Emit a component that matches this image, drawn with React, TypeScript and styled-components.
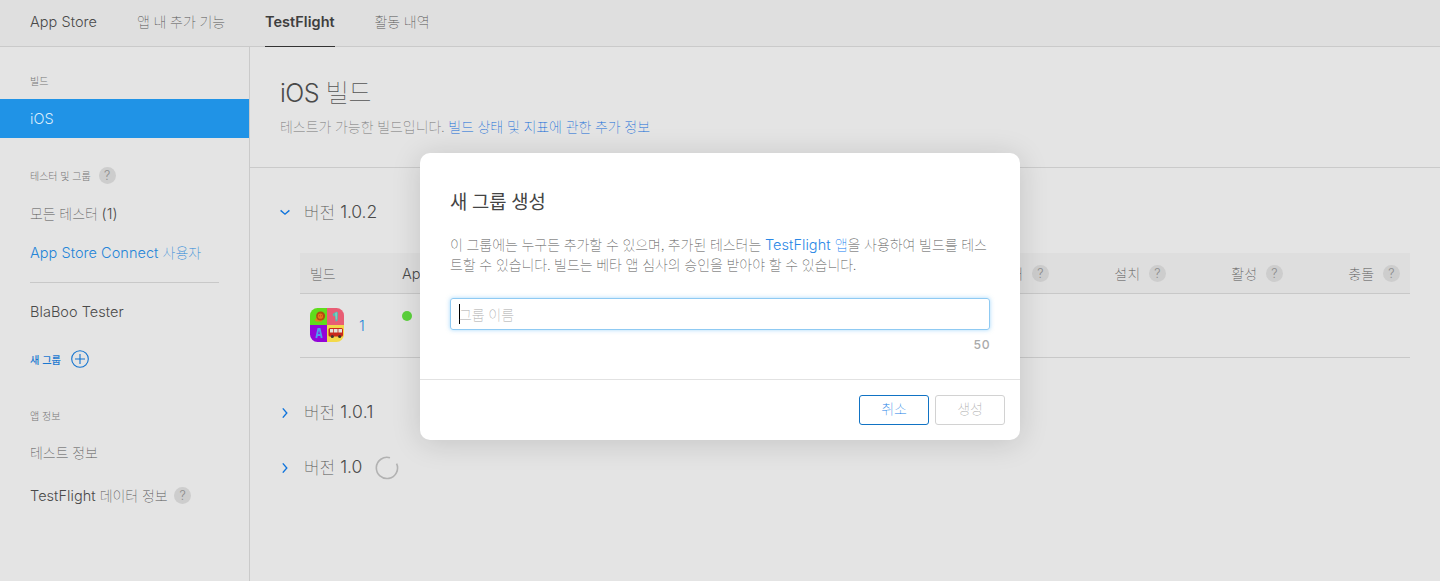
import React from "react";
import styled, { createGlobalStyle, css } from "styled-components";

const GlobalStyle = createGlobalStyle`
  *, *::before, *::after { box-sizing: border-box; }
  body {
    margin: 0;
    background: #e4e4e4;
    color: #4a4a4a;
    font-family: Inter, "Noto Sans CJK KR", sans-serif;
    font-size: 14.5px;
    overflow: hidden;
  }
`;

const Ko = styled.span<{ $color?: string; $size?: number; $weight?: number; $gap?: number }>`
  font-family: "Noto Sans CJK KR", sans-serif;
  font-size: ${(p) => p.$size ?? 14}px;
  font-weight: ${(p) => p.$weight ?? 100};
  word-spacing: ${(p) => p.$gap ?? 0.7}px;
  letter-spacing: -0.06px;
  color: ${(p) => p.$color ?? "#555"};
  white-space: pre;
`;

const Page = styled.div`
  height: 581px;
  display: flex;
  flex-direction: column;
`;

const TopBar = styled.nav`
  height: 47px;
  flex: none;
  display: flex;
  gap: 39.5px;
  padding-left: 30px;
  background: #dfdfdf;
  border-bottom: 1px solid #cacaca;
`;

const Tab = styled.a<{ $active?: boolean; $width: number }>`
  height: 47px;
  width: ${(p) => p.$width}px;
  line-height: 43px;
  white-space: nowrap;
  ${(p) =>
    p.$active &&
    css`
      color: #3e3e3e;
      border-bottom: 1px solid #333;
    `}
`;

const Body = styled.div`
  flex: 1;
  display: flex;
  min-height: 0;
`;

const Sidebar = styled.aside`
  width: 250px;
  flex: none;
  border-right: 1px solid #cacaca;
`;

const SideRow = styled.div<{ $top: number; $h?: number; $active?: boolean; $color?: string }>`
  display: flex;
  align-items: center;
  white-space: pre;
  margin-top: ${(p) => p.$top}px;
  height: ${(p) => p.$h ?? 38}px;
  padding-left: 30px;
  color: ${(p) => p.$color ?? "#4a4a4a"};
  background: ${(p) => (p.$active ? "#2093e6" : "transparent")};
`;

const Rule = styled.hr`
  margin: 11px 30px 0 30px;
  border: 0;
  height: 1px;
  background: #c8c8c8;
`;

const Help = styled.span<{ $left?: number }>`
  display: inline-flex;
  align-items: center;
  justify-content: center;
  width: 17px;
  height: 17px;
  margin-left: ${(p) => p.$left ?? 9}px;
  border-radius: 50%;
  background: #cdcdcd;
  color: #8a8a8a;
  font-size: 12.5px;
  font-weight: 300;
  flex: none;
`;

const Latin = styled.span<{ $spacing?: number; $size?: number; $weight?: number; $color?: string }>`
  letter-spacing: ${(p) => p.$spacing ?? 0.04}px;
  font-size: ${(p) => p.$size ?? 14.5}px;
  font-weight: ${(p) => p.$weight ?? 350};
  ${(p) => p.$color && `color: ${p.$color};`}
`;

const Main = styled.main`
  flex: 1;
`;

const Heading = styled.header`
  height: 121px;
  padding: 26px 0 0 30px;
  border-bottom: 1px solid #cacaca;
`;

const Title = styled.h1`
  margin: 0;
  height: 38px;
  line-height: 36px;
  font-weight: 300;
  white-space: pre;
`;

const Description = styled.p`
  margin: 5px 0 0;
  height: 22px;
  line-height: 21px;
  white-space: pre;
`;

const Version = styled.div<{ $top: number }>`
  display: flex;
  align-items: center;
  height: 30px;
  margin-top: ${(p) => p.$top}px;
  padding-left: 30px;
  white-space: pre;
`;

const VersionLabel = styled.span`
  display: flex;
  align-items: center;
  margin-left: 14px;
  padding-bottom: 2px;
`;

const Table = styled.section`
  margin: 26px 30px 0 50px;
`;

const TableHead = styled.div`
  display: flex;
  align-items: center;
  height: 41px;
  padding-left: 10px;
  background: #dedede;
  border-bottom: 1px solid #c8c8c8;
`;

const TableRow = styled.div`
  display: flex;
  align-items: center;
  height: 64px;
  padding: 0 0 2px 10px;
  border-bottom: 1px solid #c8c8c8;
`;

const BuildCell = styled.div`
  width: 92px;
  display: flex;
  align-items: center;
  gap: 15px;
`;

const BuildLink = styled.a`
  padding-top: 2px;
  color: #2585d8;
`;

const StatusCell = styled.div`
  flex: 1;
`;

const NumberCell = styled.div`
  width: 117px;
  display: flex;
  align-items: center;
  justify-content: flex-end;
  padding-right: 10px;
`;

const Dot = styled.i`
  display: block;
  width: 10px;
  height: 10px;
  margin-bottom: 18px;
  border-radius: 50%;
  background: #5bd23c;
`;

const Dialog = styled.div`
  position: absolute;
  left: 420px;
  top: 153px;
  width: 600px;
  height: 287px;
  border-radius: 10px;
  background: #fff;
  box-shadow: 0 3px 30px rgba(0, 0, 0, 0.14);
  display: flex;
  flex-direction: column;
`;

const DialogBody = styled.div`
  height: 226px;
  padding: 34px 30px 0;
`;

const DialogTitle = styled.h2`
  margin: 0;
  height: 30px;
  line-height: 28px;
`;

const DialogText = styled.p`
  margin: 17px 0 0;
  line-height: 20px;
  height: 40px;
  white-space: pre;
`;

const Line = styled.span`
  display: block;
  height: 20px;
`;

const Field = styled.div`
  margin-top: 24px;
  height: 32px;
  display: flex;
  align-items: center;
  padding-left: 8px;
  border: 1px solid #8fcaf3;
  border-radius: 3px;
  box-shadow: 0 0 4px rgba(80, 180, 250, 0.5);
`;

const Caret = styled.i`
  width: 1px;
  height: 20px;
  margin-right: -1px;
  background: #000;
`;

const Counter = styled.div`
  margin-top: 5px;
  text-align: right;
  line-height: 18px;
`;

const DialogFooter = styled.footer`
  flex: 1;
  display: flex;
  justify-content: flex-end;
  gap: 6px;
  padding: 15px 15px 0 0;
  border-top: 1px solid #e2e2e2;
`;

const Button = styled.button<{ $primary?: boolean }>`
  width: 70px;
  height: 30px;
  padding: 0 0 4px;
  background: #fff;
  border: 1px solid ${(p) => (p.$primary ? "#1173c4" : "#d2d2d2")};
  border-radius: 3px;
`;

const PlusIcon = styled.svg`
  margin-left: 10px;
`;

const SpinnerIcon = styled.svg`
  margin: 2px 0 0 13px;
`;

const BLUE = "#2585d8";

const ChevronDown = () => (
  <svg width="10" height="10" viewBox="0 0 10 10" fill="none" stroke="#0f74dc" strokeWidth="1.4">
    <path d="M0.6 3.4 5 7.2 9.4 3.4" />
  </svg>
);

const ChevronRight = () => (
  <svg width="10" height="12" viewBox="0 0 10 12" fill="none" stroke="#0f74dc" strokeWidth="1.4">
    <path d="M2.8 2.4 6.8 7 2.8 11.6" />
  </svg>
);

const PlusCircle = () => (
  <PlusIcon width="18" height="18" viewBox="0 0 18 18" fill="none" stroke="#1273cf" strokeWidth="1.1">
    <circle cx="9" cy="9" r="8.3" />
    <path d="M9 4v10M4 9h10" />
  </PlusIcon>
);

const Spinner = () => (
  <SpinnerIcon width="24" height="24" viewBox="0 0 24 24" fill="none" stroke="#b2b2b2" strokeWidth="1.6">
    <path d="M15 1.8A10.6 10.6 0 1 0 21.6 7.6" />
  </SpinnerIcon>
);

const AppIcon = () => (
  <svg width="34" height="34" viewBox="0 0 34 34">
    <defs>
      <clipPath id="rounded">
        <rect width="34" height="34" rx="7.5" />
      </clipPath>
    </defs>
    <g clipPath="url(#rounded)">
      <path fill="#5fdc1c" d="M0 0h17v17H0z" />
      <path fill="#e85d74" d="M17 0h17v17H17z" />
      <path fill="#9305d8" d="M0 17h17v17H0z" />
      <path fill="#f3d94a" d="M17 17h17v17H17z" />
      <path fill="#dd8a14" d="M4.600 12 8 8l4 3v2.500H6z" />
      <circle cx="10.600" cy="8" r="4.500" fill="#b5490f" />
      <circle cx="10.400" cy="8.200" r="2.600" fill="#ea7417" />
      <path fill="#8a3a12" d="M9 7.500h.9v.8H9zM11.200 7.500h.9v.8h-.9z" />
      <path fill="#55bdb0" d="m22.500 6 4-2.500 1.500 1-.3 8-2 1.300-.8-6-1.500.6z" />
      <path fill="#a7ded0" d="m25.500 5 1-.7v7l-.6.500z" />
      <path d="m6.300 30 2-9h1.400l2 9M7 27h4" fill="none" stroke="#4c9cf0" strokeWidth="1.900" />
      <rect x="18.500" y="20" width="14.500" height="8.500" rx="1.500" fill="#c9281c" />
      <path fill="#e3e4dc" d="M20 21h3.300v3.500H20zM24 21h3.600v3.500H24zM28.400 21h3.600v3.500h-3.600z" />
      <circle cx="22.300" cy="28.500" r="1.600" fill="#42342e" />
      <circle cx="29.700" cy="28.500" r="1.600" fill="#42342e" />
    </g>
  </svg>
);

const VersionName = ({ value, spacing = 0.05 }: { value: string; spacing?: number }) => (
  <VersionLabel>
    <Ko $size={17} $gap={1.3}>버전 </Ko>
    <Latin $size={17.5} $weight={320} $spacing={spacing}>{value}</Latin>
  </VersionLabel>
);

export default function App() {
  return (
    <>
      <GlobalStyle />
      <Page>
        <TopBar>
          <Tab $width={67.5}><Latin>App Store</Latin></Tab>
          <Tab $width={88.5}><Ko>앱 내 추가 기능</Ko></Tab>
          <Tab $width={70} $active><Latin $weight={560}>TestFlight</Latin></Tab>
          <Tab $width={56}><Ko>활동 내역</Ko></Tab>
        </TopBar>
        <Body>
          <Sidebar>
            <SideRow $top={24} $h={18}><Ko $size={10} $weight={300} $color="#777">빌드</Ko></SideRow>
            <SideRow $top={10} $h={39} $active $color="#d9edfb"><Latin>iOS</Latin></SideRow>
            <SideRow $top={27} $h={20}>
              <Ko $size={10} $weight={300} $color="#777">테스터 및 그룹</Ko>
              <Help $left={8}>?</Help>
            </SideRow>
            <SideRow $top={9}><Ko>모든 테스터 </Ko><Latin>(1)</Latin></SideRow>
            <SideRow $top={1} $color={BLUE}><Latin>App Store Connect </Latin><Ko $color={BLUE}>사용자</Ko></SideRow>
            <Rule />
            <SideRow $top={9}><Latin>BlaBoo Tester</Latin></SideRow>
            <SideRow $top={20} $h={18}><Ko $size={10.2} $weight={500} $color="#1b78d0">새 그룹</Ko><PlusCircle /></SideRow>
            <SideRow $top={37} $h={20}><Ko $size={10} $weight={300} $color="#777">앱 정보</Ko></SideRow>
            <SideRow $top={8}><Ko>테스트 정보</Ko></SideRow>
            <SideRow $top={5}><Latin>TestFlight </Latin><Ko>데이터 정보</Ko><Help $left={6.5}>?</Help></SideRow>
          </Sidebar>
          <Main>
            <Heading>
              <Title><Latin $size={25} $weight={300} $spacing={-0.5}>iOS </Latin><Ko $size={25}>빌드</Ko></Title>
              <Description>
                <Ko $color="#777">테스트가 가능한 빌드입니다. </Ko>
                <Ko $color="#0e6ad8">빌드 상태 및 지표에 관한 추가 정보</Ko>
              </Description>
            </Heading>
            <Version $top={29}><ChevronDown /><VersionName value="1.0.2" spacing={-0.1} /></Version>
            <Table>
              <TableHead>
                <BuildCell><Ko>빌드</Ko></BuildCell>
                <StatusCell><Latin>App</Latin></StatusCell>
                <NumberCell><Ko>테스터</Ko><Help>?</Help></NumberCell>
                <NumberCell><Ko>설치</Ko><Help>?</Help></NumberCell>
                <NumberCell><Ko>활성</Ko><Help>?</Help></NumberCell>
                <NumberCell><Ko>충돌</Ko><Help>?</Help></NumberCell>
              </TableHead>
              <TableRow>
                <BuildCell><AppIcon /><BuildLink><Latin>1</Latin></BuildLink></BuildCell>
                <StatusCell><Dot /></StatusCell>
              </TableRow>
            </Table>
            <Version $top={39}><ChevronRight /><VersionName value="1.0.1" spacing={0.3} /></Version>
            <Version $top={25}><ChevronRight /><VersionName value="1.0" /><Spinner /></Version>
          </Main>
        </Body>
      </Page>
      <Dialog role="dialog">
        <DialogBody>
          <DialogTitle><Ko $size={18.8} $weight={400} $color="#444">새 그룹 생성</Ko></DialogTitle>
          <DialogText>
            <Line><Ko>이 그룹에는 누구든 추가할 수 있으며, 추가된 테스터는 </Ko><Latin $color="#2a88e6">TestFlight </Latin><Ko $color="#0f7cf0">앱</Ko><Ko>을 사용하여 빌드를 테스</Ko></Line>
            <Line><Ko>트할 수 있습니다. 빌드는 베타 앱 심사의 승인을 받아야 할 수 있습니다.</Ko></Line>
          </DialogText>
          <Field><Caret /><Ko $color="#aaa">그룹 이름</Ko></Field>
          <Counter><Latin $size={12.2} $weight={450} $spacing={0.5} $color="#aaa">50</Latin></Counter>
        </DialogBody>
        <DialogFooter>
          <Button $primary><Ko $color="#1a80e6">취소</Ko></Button>
          <Button disabled><Ko $color="#aaa">생성</Ko></Button>
        </DialogFooter>
      </Dialog>
    </>
  );
}
